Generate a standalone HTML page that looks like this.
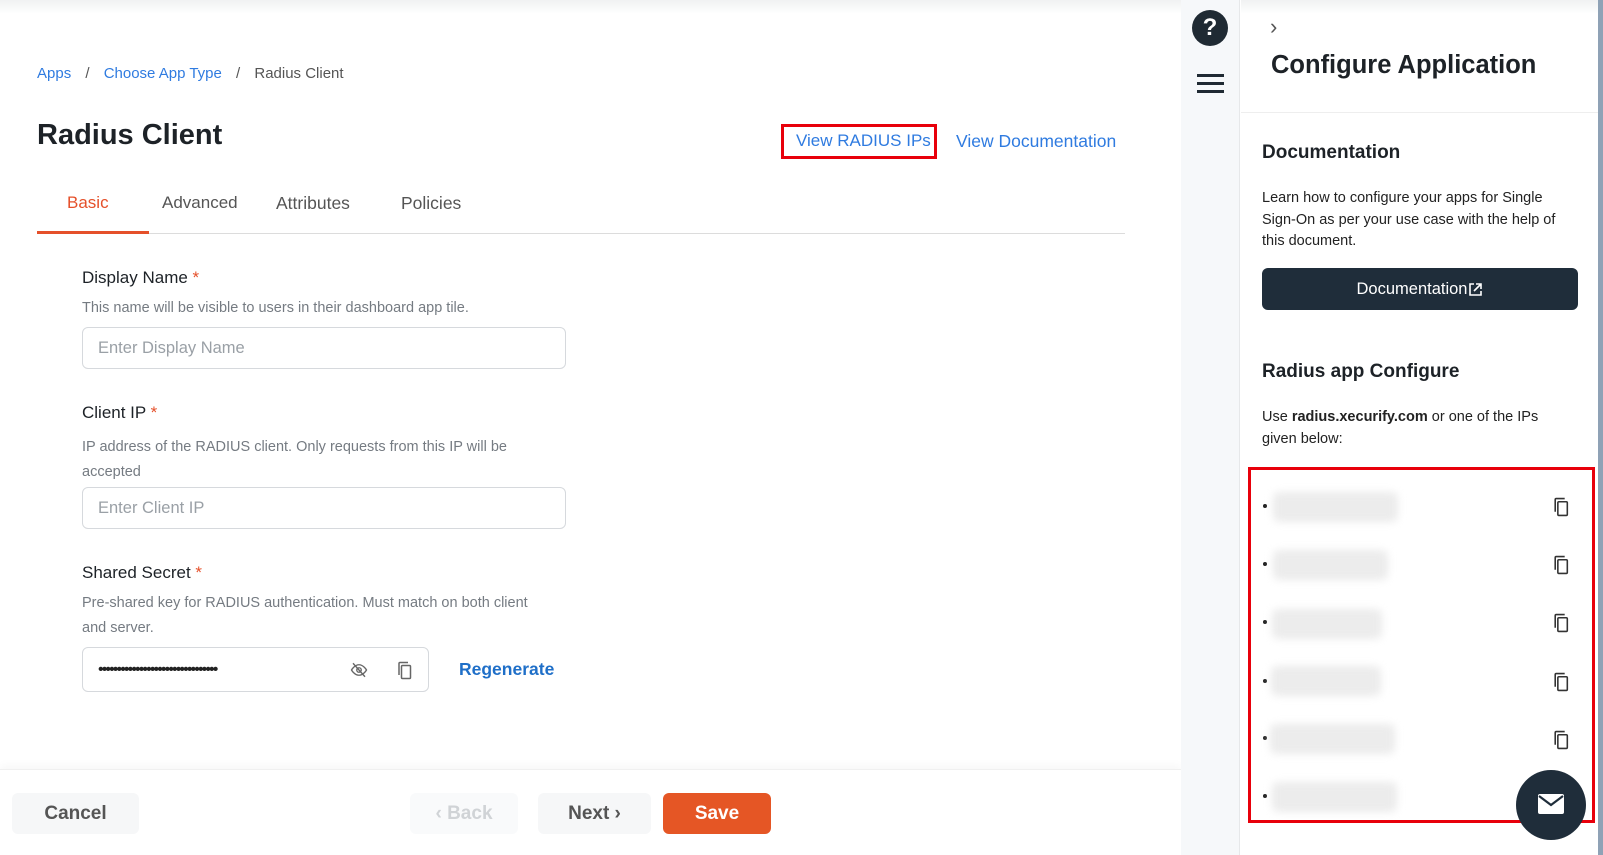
<!DOCTYPE html>
<html><head><meta charset="utf-8"><style>
*{box-sizing:border-box;margin:0;padding:0}
body{width:1603px;height:855px;overflow:hidden;background:#fff;font-family:"Liberation Sans",sans-serif;position:relative;color:#1d2227}
.a{position:absolute;white-space:nowrap}
.lbl{font-size:17px;color:#1d2227}
.lbl span{color:#e5502a}
.help{font-size:14.5px;color:#757b82}
.inp{position:absolute;border:1px solid #d6d9dd;border-radius:6px;background:#fff;font-size:16.5px;color:#9aa0a6;padding-left:15px;display:flex;align-items:center}
.btn{position:absolute;border-radius:6px;display:flex;align-items:center;justify-content:center;font-size:19px;font-weight:bold}
.blur{position:absolute;height:30px;border-radius:6px;background:#ececec;filter:blur(4px)}
.dot{position:absolute;width:4px;height:4px;border-radius:2px;background:#222}
</style></head><body>
<div class="a" style="left:0;top:0;width:1181px;height:14px;background:linear-gradient(#f0f1f2,#fff)"></div>
<div class="a" style="left:37px;top:65px;font-size:15px;color:#2f7be0">Apps <span style="color:#555;margin:0 10px">/</span> Choose App Type <span style="color:#555;margin:0 10px">/</span> <span style="color:#555">Radius Client</span></div>
<div class="a" style="left:37px;top:119px;font-size:29px;font-weight:bold;color:#1d2227">Radius Client</div>
<div class="a" style="left:781px;top:124px;width:156px;height:35px;border:3px solid #e8000b"></div>
<div class="a" style="left:796px;top:131px;font-size:17px;color:#2f7be0">View RADIUS IPs</div>
<div class="a" style="left:956px;top:131px;font-size:17.5px;color:#2f7be0">View Documentation</div>
<div class="a" style="left:67px;top:193px;font-size:17px;color:#e5502a">Basic</div>
<div class="a" style="left:162px;top:193px;font-size:17px;color:#555">Advanced</div>
<div class="a" style="left:276px;top:193px;font-size:17.5px;color:#555">Attributes</div>
<div class="a" style="left:401px;top:193px;font-size:17.5px;color:#555">Policies</div>
<div class="a" style="left:37px;top:233px;width:1088px;height:1px;background:#dcdcdc"></div>
<div class="a" style="left:37px;top:231px;width:112px;height:3px;background:#e5502a"></div>
<div class="a lbl" style="left:82px;top:268px">Display Name <span>*</span></div>
<div class="a help" style="left:82px;top:300px">This name will be visible to users in their dashboard app tile.</div>
<div class="inp" style="left:82px;top:327px;width:484px;height:42px">Enter Display Name</div>
<div class="a lbl" style="left:82px;top:403px">Client IP <span>*</span></div>
<div class="a help" style="left:82px;top:435px;line-height:25px">IP address of the RADIUS client. Only requests from this IP will be<br>accepted</div>
<div class="inp" style="left:82px;top:487px;width:484px;height:42px">Enter Client IP</div>
<div class="a lbl" style="left:82px;top:563px">Shared Secret <span>*</span></div>
<div class="a help" style="left:82px;top:591px;line-height:25px">Pre-shared key for RADIUS authentication. Must match on both client<br>and server.</div>
<div class="inp" style="left:82px;top:647px;width:347px;height:45px;color:#222;font-size:16px;letter-spacing:-1.9px">••••••••••••••••••••••••••••••••</div>
<svg class="a" style="left:350px;top:661px" width="18" height="18" viewBox="0 0 24 24" fill="none" stroke="#666" stroke-width="1.8"><path d="M2 12s4-7 10-7 10 7 10 7-4 7-10 7S2 12 2 12z"/><circle cx="12" cy="12" r="3"/><path d="M4 3l16 18"/></svg>
<svg class="a" style="left:396px;top:661px" width="17" height="19" viewBox="0 0 17 19" fill="none" stroke="#666" stroke-width="1.5"><path d="M3 14V2.5a1 1 0 011-1h8"/><rect x="5.5" y="4.5" width="9" height="13" rx="1"/></svg>
<div class="a" style="left:459px;top:659px;font-size:17.5px;font-weight:bold;color:#1f6fc8">Regenerate</div>
<div class="a" style="left:0;top:769px;width:1181px;height:86px;border-top:1px solid #f0f0f0;box-shadow:0 -4px 8px rgba(0,0,0,0.03)"></div>
<div class="btn" style="left:12px;top:793px;width:127px;height:41px;background:#f6f7f8;color:#555">Cancel</div>
<div class="btn" style="left:410px;top:793px;width:108px;height:41px;background:#f9fafb;color:#d0d3d6">‹ Back</div>
<div class="btn" style="left:538px;top:793px;width:113px;height:41px;background:#f6f7f8;color:#555">Next ›</div>
<div class="btn" style="left:663px;top:793px;width:108px;height:41px;background:#e55625;color:#fff">Save</div>
<div class="a" style="left:1181px;top:0;width:59px;height:855px;background:#f6f8fa;border-right:1px solid #e6e8ea"></div>
<div class="a" style="left:1192px;top:10px;width:36px;height:36px;border-radius:50%;background:#1f2a33;color:#fff;font-size:24px;font-weight:bold;text-align:center;line-height:36px">?</div>
<div class="a" style="left:1197px;top:74px;width:27px;height:3px;background:#1f2a33;box-shadow:0 8px 0 #1f2a33,0 16px 0 #1f2a33"></div>
<div class="a" style="left:1241px;top:0;width:357px;height:14px;background:linear-gradient(#f0f1f2,#fff)"></div>
<div class="a" style="left:1598px;top:0;width:5px;height:855px;background:#8fa2b6"></div>
<div class="a" style="left:1270px;top:14px;font-size:22px;color:#555">›</div>
<div class="a" style="left:1271px;top:51px;font-size:25.5px;font-weight:bold;color:#1d2227">Configure Application</div>
<div class="a" style="left:1241px;top:112px;width:357px;height:1px;background:#eee"></div>
<div class="a" style="left:1262px;top:142px;font-size:19px;font-weight:bold">Documentation</div>
<div class="a" style="left:1262px;top:188px;font-size:14.5px;line-height:21.5px;color:#222">Learn how to configure your apps for Single<br>Sign-On as per your use case with the help of<br>this document.</div>
<div class="btn" style="left:1262px;top:268px;width:316px;height:42px;background:#1f2d3a;color:#fff;font-size:16.5px;font-weight:normal">Documentation<svg width="15" height="15" viewBox="0 0 15 15" fill="none" stroke="#fff" stroke-width="1.6" style="margin-left:1px"><path d="M6 2H2v11h11V9M8 2h5v5M13 2L6 9"/></svg></div>
<div class="a" style="left:1262px;top:361px;font-size:19px;font-weight:bold">Radius app Configure</div>
<div class="a" style="left:1262px;top:406px;font-size:14.5px;line-height:22px;color:#222">Use <b>radius.xecurify.com</b> or one of the IPs<br>given below:</div>
<div class="a" style="left:1248px;top:467px;width:347px;height:356px;border:3px solid #e8000b"></div>
<div class="dot" style="left:1263px;top:504px"></div><div class="blur" style="left:1273px;top:492px;width:125px"></div>
<div class="dot" style="left:1263px;top:562px"></div><div class="blur" style="left:1273px;top:550px;width:115px"></div>
<div class="dot" style="left:1263px;top:620px"></div><div class="blur" style="left:1272px;top:609px;width:110px"></div>
<div class="dot" style="left:1263px;top:679px"></div><div class="blur" style="left:1271px;top:666px;width:110px"></div>
<div class="dot" style="left:1263px;top:736px"></div><div class="blur" style="left:1270px;top:724px;width:125px"></div>
<div class="dot" style="left:1263px;top:794px"></div><div class="blur" style="left:1272px;top:782px;width:125px"></div>
<svg class="a" style="left:1552px;top:497px" width="18" height="20" viewBox="0 0 17 19" fill="none" stroke="#333" stroke-width="1.5"><path d="M3 14V2.5a1 1 0 011-1h8"/><rect x="5.5" y="4.5" width="9" height="13" rx="1"/></svg>
<svg class="a" style="left:1552px;top:555px" width="18" height="20" viewBox="0 0 17 19" fill="none" stroke="#333" stroke-width="1.5"><path d="M3 14V2.5a1 1 0 011-1h8"/><rect x="5.5" y="4.5" width="9" height="13" rx="1"/></svg>
<svg class="a" style="left:1552px;top:613px" width="18" height="20" viewBox="0 0 17 19" fill="none" stroke="#333" stroke-width="1.5"><path d="M3 14V2.5a1 1 0 011-1h8"/><rect x="5.5" y="4.5" width="9" height="13" rx="1"/></svg>
<svg class="a" style="left:1552px;top:672px" width="18" height="20" viewBox="0 0 17 19" fill="none" stroke="#333" stroke-width="1.5"><path d="M3 14V2.5a1 1 0 011-1h8"/><rect x="5.5" y="4.5" width="9" height="13" rx="1"/></svg>
<svg class="a" style="left:1552px;top:730px" width="18" height="20" viewBox="0 0 17 19" fill="none" stroke="#333" stroke-width="1.5"><path d="M3 14V2.5a1 1 0 011-1h8"/><rect x="5.5" y="4.5" width="9" height="13" rx="1"/></svg>
<div class="a" style="left:1516px;top:770px;width:70px;height:70px;border-radius:50%;background:#1f2d3a"></div>
<svg class="a" style="left:1537px;top:793px" width="28" height="22" viewBox="0 0 28 22"><rect x="1" y="1" width="26" height="20" rx="2" fill="#fff"/><path d="M2 3l12 9 12-9" fill="none" stroke="#1f2d3a" stroke-width="2.2"/></svg>
</body></html>
